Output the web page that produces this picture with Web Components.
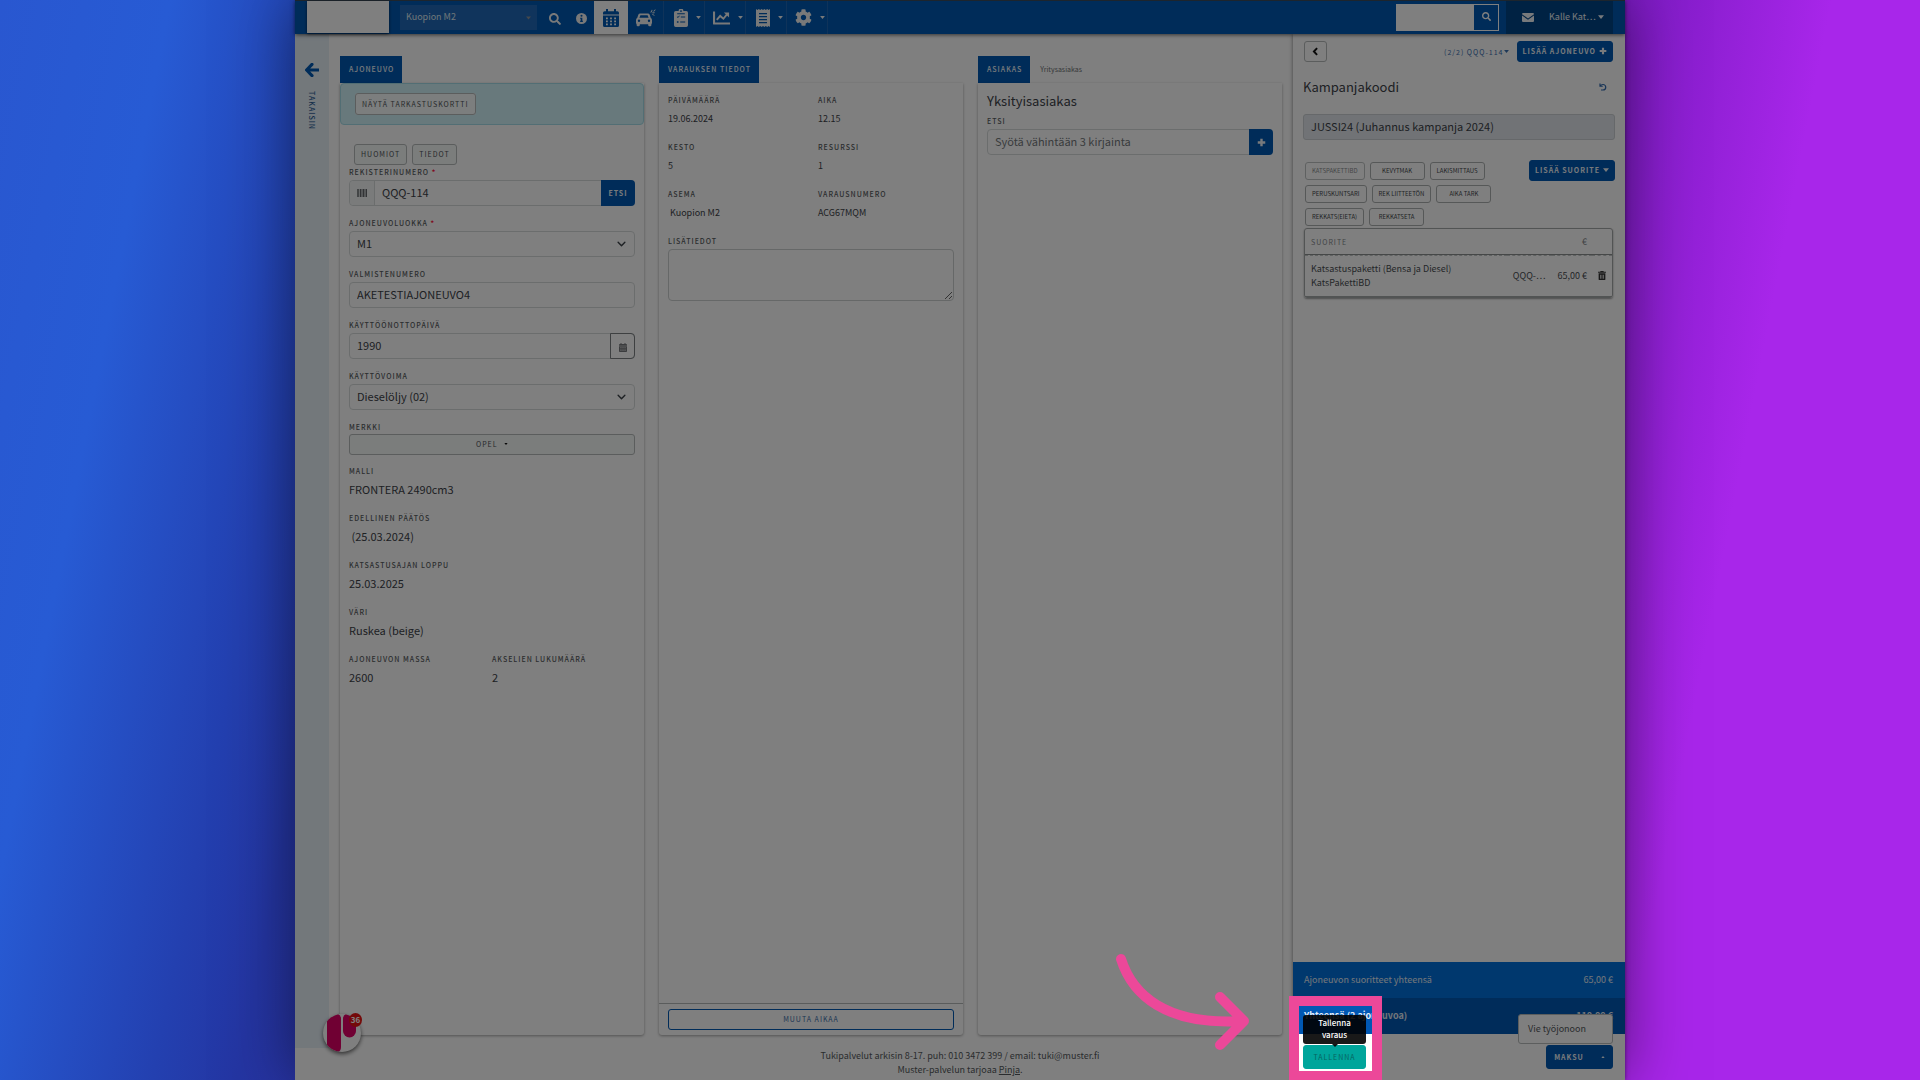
<!DOCTYPE html>
<html lang="fi">
<head>
<meta charset="utf-8">
<title>Muster</title>
<style>
html, body { margin: 0; min-height: 100%; }
body {
  font-family: "Noto Sans CJK SC", "Noto Sans", sans-serif;
  --blue: #0059b3;
  --ink: #3c4248;
  --line: #d6dada;
  --muted: #585c60;
  color: var(--ink);
  background: linear-gradient(101deg, #2957d0 0%, #275bd4 8%, #2340b0 17%, #2435a2 21%, #4a1fa8 50%, #7018b8 74%, #a826ea 86%, #a826ea 100%);
}
</style>
</head>
<body>
<muster-app></muster-app>

<script>
const shared = `
  *, *::before, *::after { box-sizing: border-box; }
  button, input, select, textarea { font-family: inherit; margin: 0; }
  button { cursor: pointer; }
  a { color: inherit; }
`;

function define(name, css, html) {
  const template = document.createElement('template');
  customElements.define(name, class extends HTMLElement {
    constructor() {
      super();
      this.attachShadow({ mode: 'open' });
    }
    connectedCallback() {
      if (this.shadowRoot.childNodes.length) return;
      template.innerHTML = `<style>${shared}${css}</style>` + (typeof html === 'function' ? html(this) : html);
      this.shadowRoot.append(template.content.cloneNode(true));
    }
  });
}

const icons = {
  search: ['0 0 512 512', '<path d="M505 442.7L405.3 343c-4.5-4.5-10.6-7-17-7H372c27.6-35.3 44-79.7 44-128C416 93.1 322.9 0 208 0S0 93.1 0 208s93.1 208 208 208c48.3 0 92.7-16.4 128-44v16.3c0 6.4 2.5 12.5 7 17l99.7 99.7c9.4 9.4 24.6 9.4 33.9 0l28.3-28.3c9.4-9.4 9.4-24.6.1-34zM208 336c-70.7 0-128-57.2-128-128 0-70.7 57.2-128 128-128 70.7 0 128 57.2 128 128 0 70.7-57.2 128-128 128z"/>'],
  info: ['0 0 16 16', '<path fill-rule="evenodd" d="M8 0a8 8 0 1 1 0 16A8 8 0 0 1 8 0zM8 2.6a1.5 1.5 0 1 0 0 3 1.5 1.5 0 0 0 0-3zM6 6.8v1.6h.8v3H6V13h4v-1.6h-.8V6.8z"/>'],
  calendar: ['0 0 16 18', '<path fill-rule="evenodd" d="M3 0h2v2.200h6V0h2v2.200h1.400A1.600 1.600 0 0 1 16 3.800V5.600H0V3.800a1.600 1.600 0 0 1 1.600-1.600H3zM0 6.600h16v9.800A1.600 1.600 0 0 1 14.400 18H1.600A1.600 1.600 0 0 1 0 16.400zM3 8.400v1.800h1.800V8.400zM7.100 8.400v1.800h1.800V8.400zM11.200 8.400v1.800H13V8.400zM3 11.400v1.800h1.800v-1.800zM7.100 11.400v1.800h1.800v-1.800zM11.200 11.400v1.800H13v-1.800zM3 14.400v1.800h1.800v-1.800zM7.100 14.400v1.800h1.800v-1.800zM11.200 14.400v1.800H13v-1.800z"/>'],
  car: ['0 0 20 18', '<path fill-rule="evenodd" d="M4.200 4.500h7.600a2 2 0 0 1 1.900 1.300l1 2.900a2.600 2.600 0 0 1 1.300 2.200v3.200a1 1 0 0 1-.6.9V16a1.300 1.300 0 0 1-1.300 1.300h-.6A1.300 1.300 0 0 1 12.200 16v-.8H3.800v.8a1.300 1.300 0 0 1-1.300 1.300h-.6A1.300 1.300 0 0 1 .6 16v-1a1 1 0 0 1-.6-.9v-3.200a2.600 2.600 0 0 1 1.300-2.200l1-2.900A2 2 0 0 1 4.200 4.500zM4.400 6.300l-1 2.500h9.200l-1-2.500zM3 10.600a1.200 1.200 0 1 0 0 2.400 1.200 1.200 0 0 0 0-2.400zM13 10.600a1.200 1.200 0 1 0 0 2.400 1.200 1.200 0 0 0 0-2.400z"/><path d="M14.200 3.400L16 .6l.5 1.200L15.300 3.600zM17.200 2.200L19.600 0l-.4 1.600-1.400 1.200zM16 3.600l2.200-.4.8.8-2.200.4zM15.600 4.800l2 .6 1.600 1.400-2.200-.6z"/>'],
  clipboard: ['0 0 14 18', '<path fill-rule="evenodd" d="M4.600 2a2.400 2.400 0 0 1 4.800 0h2.900A1.700 1.700 0 0 1 14 3.700v12.600a1.700 1.700 0 0 1-1.700 1.700H1.700A1.700 1.700 0 0 1 0 16.300V3.700A1.700 1.700 0 0 1 1.700 2zM7 1.200a.9.9 0 1 0 0 1.800.9.9 0 0 0 0-1.800zM3.200 4.200v1h7.600v-1zM2.800 7.900l1.100 1.200 1.900-2-.6-.6-1.300 1.400-.5-.6zM6.800 7.400v1h4.400v-1zM2.900 12.200v1.500h1.600v-1.500zM6.200 12.400v1h5v-1z"/>'],
  chart: ['0 0 18 14', '<path d="M0 0h2.200v11.800H18V14H1A1 1 0 0 1 0 13z"/><path d="M4 9l3.600-4.200 3.400 3 4-4.800" fill="none" stroke="currentColor" stroke-width="2"/><path d="M11.600 1.200H17v5.200z"/>'],
  receipt: ['0 0 14 18', '<path fill-rule="evenodd" d="M0 0l1.400 1L2.800 0l1.400 1L5.600 0 7 1l1.400-1 1.400 1 1.400-1 1.400 1L14 0v18l-1.400-1-1.400 1-1.400-1-1.400 1L7 17l-1.400 1-1.400-1-1.400 1-1.400-1L0 18zM3 4v1.200h8V4zM3 7v1.200h8V7zM3 10v1.200h8V10zM3 13v1.200h8V13z"/>'],
  cog: ['0 0 512 512', '<path d="M487.4 315.7l-42.600-24.600c4.300-23.200 4.300-47 0-70.200l42.600-24.600c4.900-2.800 7.100-8.600 5.500-14-11.100-35.600-30-67.800-54.700-94.600-3.800-4.100-10-5.100-14.800-2.300L380.800 110c-17.900-15.400-38.500-27.300-60.800-35.100V25.800c0-5.600-3.900-10.500-9.400-11.700-36.700-8.200-74.300-7.800-109.200 0-5.500 1.200-9.400 6.100-9.400 11.700V75c-22.200 7.900-42.800 19.800-60.800 35.100L88.700 85.500c-4.900-2.800-11-1.900-14.800 2.300-24.700 26.700-43.600 58.900-54.700 94.600-1.700 5.400.6 11.200 5.500 14L67.300 221c-4.300 23.200-4.300 47 0 70.200l-42.600 24.600c-4.900 2.800-7.100 8.600-5.500 14 11.100 35.600 30 67.800 54.700 94.600 3.800 4.100 10 5.100 14.800 2.300l42.600-24.600c17.900 15.400 38.500 27.300 60.800 35.100v49.200c0 5.600 3.900 10.500 9.400 11.700 36.700 8.200 74.300 7.800 109.200 0 5.500-1.200 9.400-6.100 9.400-11.700v-49.200c22.200-7.900 42.800-19.800 60.800-35.100l42.600 24.600c4.900 2.800 11 1.900 14.800-2.300 24.700-26.700 43.600-58.900 54.700-94.600 1.500-5.500-.7-11.300-5.600-14.100zM256 336c-44.100 0-80-35.900-80-80s35.900-80 80-80 80 35.900 80 80-35.900 80-80 80z"/>'],
  caret: ['0 0 8 5', '<path d="M0 0h8L4 5z"/>'],
  caretup: ['0 0 8 5', '<path d="M0 5h8L4 0z"/>'],
  envelope: ['0 0 16 12', '<path d="M1.500 0h13A1.500 1.500 0 0 1 16 1.500L8 7.200 0 1.500A1.500 1.500 0 0 1 1.500 0zM0 3.400l8 5.600 8-5.600v7.100a1.500 1.500 0 0 1-1.500 1.500h-13A1.500 1.500 0 0 1 0 10.500z"/>'],
  arrowleft: ['0 0 16 16', '<path d="M8 1.500L1.800 8 8 14.500M2.500 8H15" fill="none" stroke="currentColor" stroke-width="3.600" stroke-linecap="round" stroke-linejoin="round"/>'],
  chevleft: ['0 0 10 14', '<path d="M7.500 1.800L2.500 7l5 5.200" fill="none" stroke="currentColor" stroke-width="3"/>'],
  chevdown: ['0 0 16 10', '<path d="M2 2l6 6 6-6" fill="none" stroke="currentColor" stroke-width="2.500" stroke-linecap="round" stroke-linejoin="round"/>'],
  plus: ['0 0 12 12', '<path d="M4.400 1h3.200v3.400H11v3.200H7.600V11H4.400V7.600H1V4.400h3.400z"/>'],
  undo: ['0 0 16 16', '<path d="M2 1v5.500h5.500M2.500 6c1.500-2.300 3-3 5.500-3a5.500 5.500 0 0 1 0 11H4" fill="none" stroke="currentColor" stroke-width="2.400"/>'],
  barcode: ['0 0 20 16', '<path d="M0 0h1.500v16H0zM2.500 0h1.500v16H2.500zM5.500 0h3v16H5.500zM9.500 0h1v16h-1zM11.500 0h3v16h-3zM15.500 0h1.500v16h-1.500zM18 0h2v16h-2z"/>'],
  trash: ['0 0 14 16', '<path fill-rule="evenodd" d="M4.500 0h5l.8 1.200H14v2H0v-2h3.700zM1 4.200h12v10.300a1.500 1.500 0 0 1-1.500 1.500h-9A1.500 1.500 0 0 1 1 14.500zM3.800 6.500v7.200h1.200V6.500zM6.400 6.500v7.200h1.200V6.500zM9 6.500v7.200h1.200V6.500z"/>'],
};

define('m-icon', `
  :host { display: inline-flex; flex: none; width: var(--w, 12px); height: var(--h, var(--w, 12px)); }
  svg { width: 100%; height: 100%; fill: currentColor; display: block; }
`, el => {
  const [box, body] = icons[el.getAttribute('name')];
  return `<svg viewBox="${box}" aria-hidden="true">${body}</svg>`;
});

define('m-button', `
  :host { display: inline-flex; }
  button { flex: 1; display: flex; align-items: center; justify-content: center; gap: 4px; height: var(--height, 21px);
    padding: 0 var(--pad, 6px) 1px; border: 1px solid #b6baba; border-radius: 3px; background: transparent; color: #505458;
    font-size: 7px; line-height: 12px; letter-spacing: 1px; white-space: nowrap; }
  :host([kind=primary]) button { background: var(--blue); border-color: var(--blue); color: #f0f4f8; font-weight: 700; padding: 0 5px 1px; gap: 3px; }
  :host([kind=outline]) button { border-color: var(--blue); color: #3b6ea8; }
  :host([kind=save]) button { background: #00a59b; border-color: #00a59b; color: #07645f; }
  :host([kind=soft]) button { background: #f6faf9; }
  :host([kind=chip]) button { font-size: 6px; letter-spacing: normal; min-width: 55px; color: #44484b; border-color: #adb1b1; }
  :host([faded]) button { color: #8a8e90; border-color: #bfc3c3; }
`, el => `<button type="button"><slot></slot></button>`);

define('m-field', `
  :host { display: block; }
  label { display: block; font-size: 7px; line-height: 15px; letter-spacing: 1px; font-weight: 500; color: var(--muted); }
  i { font-style: normal; font-weight: 700; color: #ff1040; }
  .row { display: flex; height: 26px; border: 1px solid var(--line); border-radius: 4px; }
  :host([kind=textarea]) .row { height: auto; border: 0; }
  input, select, textarea { flex: 1; min-width: 0; border: 0; outline: 0; background: transparent; color: var(--ink);
    font-size: 11px; line-height: 20px; padding: 0 7px 3px; border-radius: 4px; appearance: none; }
  input::placeholder { color: #74787b; opacity: 1; }
  textarea { height: 52px; border: 1px solid #ccd0d0; resize: vertical; }
  .pick { flex: 1; display: grid; }
  .pick > * { grid-area: 1 / 1; }
  .pick m-icon { align-self: center; justify-self: end; margin-right: 8px; pointer-events: none; --w: 9px; --h: 6px; }
`, el => {
  const kind = el.getAttribute('kind'), value = el.getAttribute('value') || '';
  const control = kind === 'select'
    ? `<div class="pick"><select id="c"><option>${value}</option></select><m-icon name="chevdown"></m-icon></div>`
    : kind === 'textarea' ? `<textarea id="c"></textarea>`
    : `<input id="c" type="text" value="${value}" placeholder="${el.getAttribute('placeholder') || ''}">`;
  return `<label for="c">${el.getAttribute('label')}${el.hasAttribute('required') ? ' <i>*</i>' : ''}</label>
    <div class="row"><slot name="before"></slot>${control}<slot name="after"></slot></div>`;
});

define('m-fact', `
  :host { display: block; }
  .k { font-size: 7px; line-height: 15px; letter-spacing: 1px; font-weight: 500; color: var(--muted); }
  .v { font-size: var(--fact, 11px); line-height: 21px; white-space: pre; }
`, el => `<div class="k">${el.getAttribute('label')}</div><div class="v"><slot></slot></div>`);

define('m-panel', `
  :host { display: flex; flex-direction: column; min-width: 0; }
  .tabs { display: flex; height: 27px; }
  .tab { border: 0; background: var(--blue); color: #f0f4f8; font-size: 7px; line-height: 12px; font-weight: 500; letter-spacing: 1px; padding: 0 8px 1px 9px; }
  .other { border: 0; background: none; color: #6f7375; font-size: 7px; padding: 0 10px 1px; }
  .card { flex: 1; display: flex; flex-direction: column; box-shadow: 0 1px 3px rgba(0,0,0,.36); background: #fff; border-radius: 0 0 3px 3px; }
`, el => `<div class="tabs" role="tablist"><button class="tab" role="tab">${el.getAttribute('tab')}</button>
  ${el.hasAttribute('other') ? `<button class="other" role="tab">${el.getAttribute('other')}</button>` : ''}</div>
  <div class="card"><slot></slot></div>`);

define('m-topbar', `
  :host { display: flex; align-items: stretch; height: 34px; background: var(--blue); border-top: 1px solid #3a4a5a; color: #fff; box-shadow: 0 1px 4px rgba(0,0,0,.6); position: relative; z-index: 2; }
  .logo { width: 82px; margin: 0 11px 1px 12px; background: #fff; box-shadow: 0 1px 3px rgba(0,0,0,.6); }
  .site { display: grid; width: 137px; margin: 4px 5px 4px 0; background: #2068b8; }
  .site > * { grid-area: 1 / 1; }
  select { appearance: none; border: 0; background: none; color: #dfe8f2; font-size: 9px; padding: 0 6px 2px; }
  .site m-icon { align-self: center; justify-self: end; margin-right: 6px; color: #8a9098; --w: 5px; --h: 4px; }
  nav { display: flex; color: #f2f2f2; }
  nav button { display: flex; align-items: center; justify-content: center; gap: 8px; border: 0; border-right: 1px solid #1e66b4; background: none; color: inherit; padding: 0; width: 41px; }
  nav .plain { width: 26px; border: 0; padding-top: 2px; }
  nav .on { width: 34px; background: #fff; color: var(--blue); border: 0; }
  nav .car { width: 36px; }
  nav .drop { padding-left: 6px; }
  .small { --w: 5px; --h: 3px; }
  .tall { --w: 14px; --h: 18px; }
  .find { display: flex; margin: 3px 7px 3px auto; border: 1px solid #fff; width: 103px; }
  .find input { flex: 1; min-width: 0; border: 0; border-radius: 0; background: #fff; padding: 0 6px; font-size: 10px; }
  .find button { border: 0; width: 24px; background: var(--blue); color: #fff; padding: 0 0 3px; display: flex; align-items: center; justify-content: center; }
  .user { display: flex; align-items: center; border: 0; gap: 15px; width: 107px; margin-right: 12px; padding: 0 13px 1px 16px; background: #004486; color: #f0f4f8; font-size: 9px; line-height: 14px; }
  .user span { display: flex; align-items: center; gap: 2px; white-space: nowrap; }
`, `
  <div class="logo"></div>
  <div class="site"><select aria-label="Asema"><option>Kuopion M2</option></select><m-icon name="caret"></m-icon></div>
  <nav>
    <button class="plain" aria-label="Haku"><m-icon name="search" style="--w:12px"></m-icon></button>
    <button class="plain" aria-label="Info"><m-icon name="info" style="--w:11px"></m-icon></button>
    <button class="on" aria-label="Kalenteri"><m-icon name="calendar" style="--w:16px;--h:18px"></m-icon></button>
    <button class="car" aria-label="Ajoneuvot"><m-icon name="car" style="--w:20px;--h:18px"></m-icon></button>
    <button class="drop" aria-label="Tarkastukset"><m-icon name="clipboard" class="tall"></m-icon><m-icon name="caret" class="small"></m-icon></button>
    <button class="drop" aria-label="Raportit"><m-icon name="chart" style="--w:17px;--h:14px"></m-icon><m-icon name="caret" class="small"></m-icon></button>
    <button class="drop" aria-label="Kuitit"><m-icon name="receipt" class="tall"></m-icon><m-icon name="caret" class="small"></m-icon></button>
    <button class="drop" aria-label="Asetukset"><m-icon name="cog" style="--w:17px"></m-icon><m-icon name="caret" class="small"></m-icon></button>
  </nav>
  <div class="find"><input type="search" aria-label="Hae"><button aria-label="Hae"><m-icon name="search" style="--w:9px"></m-icon></button></div>
  <button class="user"><m-icon name="envelope" style="--w:12px;--h:9px"></m-icon><span>Kalle Kat… <m-icon name="caret" style="--w:6px;--h:4px"></m-icon></span></button>
`);

define('m-rail', `
  :host { display: flex; flex-direction: column; align-items: center; width: 34px; padding-top: 29px; background: #e6f0f7; color: var(--blue); }
  a { display: flex; flex-direction: column; align-items: center; gap: 14px; text-decoration: none; }
  span { writing-mode: vertical-rl; font-size: 7px; line-height: 12px; letter-spacing: 1px; font-weight: 500; color: #2f5f96; }
`, `<a href="#"><m-icon name="arrowleft" style="--w:14px"></m-icon><span>TAKAISIN</span></a>`);

define('vehicle-panel', `
  :host { display: flex; }
  m-panel { flex: 1; }
  .banner { height: 42px; display: flex; align-items: center; padding-left: 14px; background: #d0f2f8; border: 1px solid #a4dde8; border-radius: 4px; }
  .banner m-button { background: #f8fcfc; border-radius: 3px; }
  .actions { display: flex; gap: 5px; padding: 19px 14px 0; }
  form { display: flex; flex-direction: column; gap: 10px; padding: 0 9px; }
  .add { display: flex; align-items: center; justify-content: center; width: 25px; border-right: 1px solid var(--line); background: #f4f7f7; border-radius: 4px 0 0 4px; color: #66696c; }
  .find { border: 0; margin: -1px; background: var(--blue); color: #f0f4f8; font-size: 7px; font-weight: 700; letter-spacing: 1px; width: 34px; border-radius: 0 4px 4px 0; padding: 0 0 1px; }
  .cal { border: 1px solid #7c8083; margin: -1px; background: none; color: #77797c; width: 25px; border-radius: 0 4px 4px 0; padding: 0; }
  .brand { display: flex; flex-direction: column; font-size: 7px; line-height: 14px; letter-spacing: 1px; font-weight: 500; color: var(--muted); }
  .facts { display: grid; grid-template-columns: 1fr 1fr; row-gap: 11px; padding: 9px 9px 0; }
  .facts .wide { grid-column: 1 / -1; }
`, `
  <m-panel tab="AJONEUVO">
    <div class="banner"><m-button style="--height:22px">NÄYTÄ TARKASTUSKORTTI</m-button></div>
    <div class="actions"><m-button kind="soft">HUOMIOT</m-button><m-button kind="soft">TIEDOT</m-button></div>
    <form>
      <m-field label="REKISTERINUMERO" required value="QQQ-114">
        <span class="add" slot="before"><m-icon name="barcode" style="--w:10px;--h:8px"></m-icon></span>
        <button class="find" slot="after" type="button">ETSI</button>
      </m-field>
      <m-field label="AJONEUVOLUOKKA" required kind="select" value="M1"></m-field>
      <m-field label="VALMISTENUMERO" value="AKETESTIAJONEUVO4"></m-field>
      <m-field label="KÄYTTÖÖNOTTOPÄIVÄ" value="1990">
        <button class="cal" slot="after" type="button" aria-label="Valitse päivä"><m-icon name="calendar" style="--w:8px;--h:9px"></m-icon></button>
      </m-field>
      <m-field label="KÄYTTÖVOIMA" kind="select" value="Dieselöljy (02)"></m-field>
      <div class="brand">MERKKI<m-button kind="soft">OPEL&nbsp; <m-icon name="caret" style="--w:4px;--h:2px;color:#111"></m-icon></m-button></div>
    </form>
    <div class="facts">
      <m-fact class="wide" label="MALLI">FRONTERA 2490cm3</m-fact>
      <m-fact class="wide" label="EDELLINEN PÄÄTÖS"> (25.03.2024)</m-fact>
      <m-fact class="wide" label="KATSASTUSAJAN LOPPU">25.03.2025</m-fact>
      <m-fact class="wide" label="VÄRI">Ruskea (beige)</m-fact>
      <m-fact label="AJONEUVON MASSA">2600</m-fact>
      <m-fact label="AKSELIEN LUKUMÄÄRÄ">2</m-fact>
    </div>
  </m-panel>
`);

define('booking-panel', `
  :host { display: flex; --fact: 9px; }
  m-panel { flex: 1; }
  .facts { display: grid; grid-template-columns: 150px 1fr; row-gap: 11px; padding: 10px 9px 11px; }
  m-field { margin: 0 9px; }
  .foot { margin-top: auto; border-top: 1px solid #b5b9b9; padding: 5px 9px; display: flex; }
  .foot m-button { flex: 1; }
`, `
  <m-panel tab="VARAUKSEN TIEDOT">
    <div class="facts">
      <m-fact label="PÄIVÄMÄÄRÄ">19.06.2024</m-fact><m-fact label="AIKA">12.15</m-fact>
      <m-fact label="KESTO">5</m-fact><m-fact label="RESURSSI">1</m-fact>
      <m-fact label="ASEMA"> Kuopion M2</m-fact><m-fact label="VARAUSNUMERO">ACG67MQM</m-fact>
    </div>
    <m-field label="LISÄTIEDOT" kind="textarea"></m-field>
    <div class="foot"><m-button kind="outline">MUUTA AIKAA</m-button></div>
  </m-panel>
`);

define('customer-panel', `
  :host { display: flex; }
  m-panel { flex: 1; }
  h2 { margin: 8px 9px 3px; font-size: 13px; line-height: 20px; font-weight: 400; }
  m-field { margin: 0 9px; }
  .plus { display: flex; align-items: center; justify-content: center; border: 0; margin: -1px; width: 24px; background: var(--blue); color: #f0f4f8; border-radius: 0 4px 4px 0; padding: 0; }
`, `
  <m-panel tab="ASIAKAS" other="Yritysasiakas">
    <h2>Yksityisasiakas</h2>
    <m-field label="ETSI" placeholder="Syötä vähintään 3 kirjainta">
      <button class="plus" slot="after" type="button" aria-label="Lisää"><m-icon name="plus" style="--w:9px"></m-icon></button>
    </m-field>
  </m-panel>
`);

define('order-sidebar', `
  :host { display: flex; flex-direction: column; background: #fff; box-shadow: 0 0 4px rgba(0,0,0,.5); z-index: 1; }
  .top { display: flex; align-items: center; padding: 7px 12px 0 11px; }
  .top .veh { margin-left: auto; border: 0; background: none; padding: 0; display: flex; align-items: center; color: #3a70b0; font-size: 7px; letter-spacing: 1px; line-height: 12px; }
  .top .addv { margin-left: 8px; }
  .title { display: flex; align-items: center; justify-content: space-between; padding: 15px 18px 0 10px; }
  h2 { margin: 0; font-size: 13px; line-height: 20px; font-weight: 400; }
  .title button { border: 0; background: none; padding: 0; color: #2f68ad; display: flex; }
  .code { margin: 17px 10px 0; height: 26px; border: 1px solid #ccd0d4; border-radius: 3px; background: #e3e7ec; padding: 0 7px 2px; font-size: 11px; line-height: 20px; color: var(--ink); }
  .pick { display: flex; align-items: flex-start; justify-content: space-between; margin: 20px 10px 0 12px; }
  .chips { display: flex; flex-wrap: wrap; gap: 5px; width: 192px; margin-top: 2px; --height: 18px; }
  table { margin: 2px 12px 0 11px; border: 1px solid #a4a8a8; border-radius: 3px; border-spacing: 0; table-layout: fixed; font-size: 9px; line-height: 14px; box-shadow: 0 1px 2px rgba(0,0,0,.4); }
  th { height: 26px; padding: 0 6px; text-align: left; font-weight: 400; color: #85898b; letter-spacing: 1px; font-size: 7px; border-bottom: 1px solid #8c9090; }
  th.r { font-size: 9px; letter-spacing: normal; }
  td { height: 42px; padding: 0 6px 1px; border-top: 1px dashed #c0c4c4; border-bottom: 1px solid #a4a8a8; color: #4a4e52; white-space: nowrap; }
  .r { text-align: right; padding-right: 5px; }
  .bin { border: 0; background: none; padding: 0; color: #333; display: flex; }
  .totals { margin-top: auto; color: #e4edf6; font-size: 9px; line-height: 14px; }
  .totals div { display: flex; align-items: center; justify-content: space-between; height: 36px; padding: 0 12px 0 11px; background: #0070dc; }
  .totals div + div { background: #0058b4; font-weight: 700; }
  .acts { display: flex; justify-content: space-between; padding: 11px 12px 11px 10px; --height: 24px; }
  .anchor { position: relative; display: flex; }
  .anchor .save { width: 63px; }
  .tip { position: absolute; left: 0; right: 0; bottom: 25px; height: 29px; background: rgba(0,0,0,.9); color: #fff; border-radius: 3px; text-align: center; font-size: 8px; line-height: 12px; padding: 2px 6px; font-weight: 500; }
  .tip::after { content: ""; position: absolute; left: 50%; top: 100%; margin-left: -3px; border: 3px solid transparent; border-top-color: rgba(0,0,0,.9); }
  .menu { position: absolute; right: 0; bottom: 25px; width: 95px; height: 30px; border: 1px solid #b8bcbc; border-radius: 3px; background: #fff; color: #55595c; font-size: 9px; line-height: 14px; text-align: left; padding: 0 9px; }
  .pay { width: 67px; }
  .pay m-icon { margin-left: 14px; }
`, `
  <div class="top">
    <m-button aria-label="Takaisin"><m-icon name="chevleft" style="--w:9px;--h:9px;color:#111"></m-icon></m-button>
    <button class="veh">(2/2) QQQ-114<m-icon name="caret" style="--w:5px;--h:3px"></m-icon></button>
    <m-button class="addv" kind="primary">LISÄÄ AJONEUVO<m-icon name="plus" style="--w:8px"></m-icon></m-button>
  </div>
  <div class="title"><h2>Kampanjakoodi</h2><button aria-label="Kumoa"><m-icon name="undo" style="--w:8px"></m-icon></button></div>
  <input class="code" aria-label="Kampanjakoodi" readonly value="JUSSI24 (Juhannus kampanja 2024)">
  <div class="pick">
    <div class="chips">
      <m-button kind="chip" faded>KATSPAKETTIBD</m-button><m-button kind="chip">KEVYTMAK</m-button><m-button kind="chip">LAKISMITTAUS</m-button>
      <m-button kind="chip">PERUSKUNTSARI</m-button><m-button kind="chip">REK LIITTEETÖN</m-button><m-button kind="chip">AIKA TARK</m-button>
      <m-button kind="chip">REKKATS(EIETA)</m-button><m-button kind="chip">REKKATSETA</m-button>
    </div>
    <m-button kind="primary">LISÄÄ SUORITE <m-icon name="caret" style="--w:6px;--h:4px"></m-icon></m-button>
  </div>
  <table>
    <colgroup><col><col style="width:42px"><col style="width:40px"><col style="width:20px"></colgroup>
    <thead><tr><th>SUORITE</th><th></th><th class="r">€</th><th></th></tr></thead>
    <tbody><tr><td>Katsastuspaketti (Bensa ja Diesel)<br>KatsPakettiBD</td><td>QQQ-…</td><td class="r">65,00 €</td>
      <td><button class="bin" aria-label="Poista"><m-icon name="trash" style="--w:8px;--h:9px"></m-icon></button></td></tr></tbody>
  </table>
  <div class="totals">
    <div><span>Ajoneuvon suoritteet yhteensä</span><span>65,00 €</span></div>
    <div><span>Yhteensä (2 ajoneuvoa)</span><span>110,00 €</span></div>
  </div>
  <div class="acts">
    <div class="anchor"><m-button class="save" kind="save">TALLENNA</m-button><div class="tip" role="tooltip">Tallenna varaus</div></div>
    <div class="anchor"><m-button class="pay" kind="primary">MAKSU<m-icon name="caretup" style="--w:4px;--h:2px"></m-icon></m-button><button class="menu">Vie työjonoon</button></div>
  </div>
`);

define('help-bubble', `
  :host { position: absolute; left: 28px; bottom: 28px; width: 38px; height: 38px; z-index: 3; }
  button { width: 38px; height: 38px; border: 0; border-radius: 50%; padding: 0; background: #fff; box-shadow: 0 2px 4px rgba(0,0,0,.6); overflow: hidden; display: block; }
  svg { display: block; }
  span { position: absolute; left: 26px; top: -1px; width: 13px; height: 14px; border-radius: 50%; background: #e81414; color: #fff; font-size: 8px; line-height: 14px; font-weight: 700; text-align: center; }
`, `<button aria-label="Ohje"><svg width="38" height="38" viewBox="0 0 38 38" fill="#e00066"><path d="M4 6C7 2 11 0 15 0q3 1 3 5v28q0 4-3 5C11 37 7 35 4 32z"/><path d="M20 5q0-4 3-5 7 1 10 7v10a6.500 6.500 0 0 1-13 0z"/></svg></button><span>36</span>`);

define('tour-spotlight', `
  :host { position: absolute; inset: 0; overflow: hidden; pointer-events: none; z-index: 9; }
  .spot { position: absolute; right: 243px; bottom: -1px; width: 93px; height: 85px; border: 10px solid #ec4899; }
  .spot::before { content: ""; position: absolute; inset: 0; box-shadow: 0 0 0 9999px rgba(0,0,0,.5); z-index: -1; }
  svg { position: absolute; right: 370px; bottom: 26px; }
`, `<div class="spot"></div>
  <svg width="140" height="104" viewBox="1115 950 140 104" fill="none" stroke="#ec4899" stroke-width="10" stroke-linecap="round" stroke-linejoin="round"><path d="M1121 959C1132 994 1165 1026 1243 1021M1220 997L1244 1021L1220 1045"/></svg>`);

define('muster-app', `
  :host { display: block; padding: 0 295px; overflow: hidden; }
  .frame { position: relative; display: grid; min-height: 100vh; grid-template: auto 1fr 32px / 1fr 332px; background: #fff;
    box-shadow: 0 0 60px rgba(0,0,0,.5); }
  m-topbar { grid-column: 1 / -1; }
  main { display: flex; }
  .cols { flex: 1; display: grid; grid-template-columns: repeat(3, minmax(0, 1fr)); gap: 15px; padding: 22px 11px 13px; }
  order-sidebar { grid-area: 2 / 2 / 4 / 3; }
  footer { grid-area: 3 / 1 / 4 / 3; text-align: center; font-size: 9px; line-height: 14px; padding-top: 1px; color: #55595c; }
`, `
  <div class="frame">
    <m-topbar></m-topbar>
    <main>
      <m-rail></m-rail>
      <div class="cols"><vehicle-panel></vehicle-panel><booking-panel></booking-panel><customer-panel></customer-panel></div>
    </main>
    <order-sidebar></order-sidebar>
    <footer>Tukipalvelut arkisin 8-17. puh: 010 3472 399 / email: tuki@muster.fi<br>Muster-palvelun tarjoaa <a href="#">Pinja</a>.</footer>
    <help-bubble></help-bubble>
    <tour-spotlight></tour-spotlight>
  </div>
`);
</script>
</body>
</html>
